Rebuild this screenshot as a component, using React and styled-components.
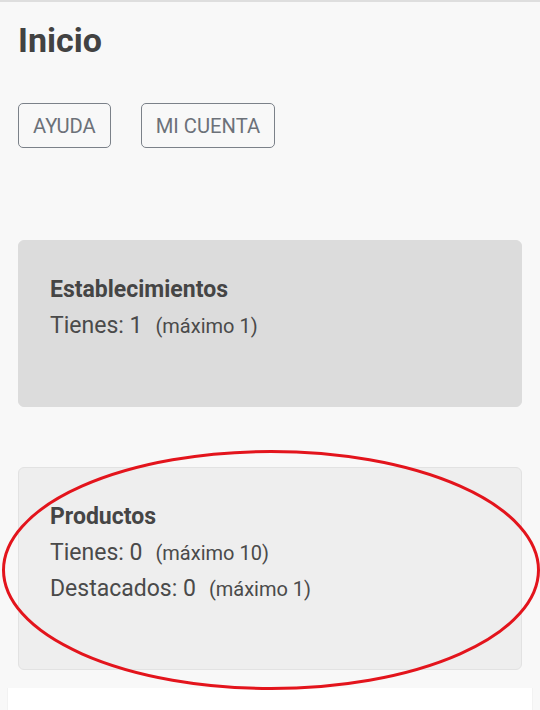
import React from "react";
import styled, { createGlobalStyle } from "styled-components";

const Global = createGlobalStyle`
  html, body { margin: 0; padding: 0; background: #f8f8f8; }
  body { font-family: Roboto, "Noto Sans", "Liberation Sans", sans-serif; }
  * { box-sizing: border-box; }
`;

const Page = styled.div`
  position: relative;
  width: 540px;
  height: 710px;
  overflow: hidden;
  background: #f8f8f8;
  border-top: 2px solid #dedede;
  padding: 18px 18px 0;
`;

const Title = styled.h1`
  margin: 0;
  font-size: 34px;
  line-height: 40px;
  font-weight: 700;
  color: #424242;
`;

const Actions = styled.div`
  display: flex;
  gap: 30px;
  margin-top: 43px;
`;

const OutlineButton = styled.button`
  height: 45px;
  display: flex;
  align-items: center;
  padding: 0 14px;
  background: transparent;
  border: 1px solid #7b8189;
  border-radius: 5px;
  font-family: Roboto, "Liberation Sans", sans-serif;
  font-size: 20.2px;
  color: #6c7179;
  letter-spacing: 0;
`;

const Card = styled.section`
  margin-top: ${(p) => p.$gap}px;
  background: ${(p) => (p.$muted ? "#eeeeee" : "#dcdcdc")};
  border: 1px solid ${(p) => (p.$muted ? "#e2e2e2" : "#dcdcdc")};
  border-radius: 6px;
  padding: 31px 31px 62px;
`;

const CardTitle = styled.div`
  font-size: 23px;
  line-height: 36px;
  font-weight: 700;
  color: #454545;
`;

const Line = styled.div`
  font-size: 23px;
  line-height: 36px;
  color: #4a4a4a;
`;

const Max = styled.span`
  font-size: 20px;
  margin-left: 13px;
`;

const Footer = styled.div`
  margin: 18px -11px 0;
  height: 40px;
  background: #ffffff;
  border-left: 1px solid #f2f2f2;
  border-right: 1px solid #f2f2f2;
`;

const Annotation = styled.svg`
  position: absolute;
  left: 0;
  top: 0;
  pointer-events: none;
`;

export default function App() {
  return (
    <>
      <Global />
      <Page>
        <Title>Inicio</Title>
        <Actions>
          <OutlineButton>AYUDA</OutlineButton>
          <OutlineButton>MI CUENTA</OutlineButton>
        </Actions>
        <Card $gap={92}>
          <CardTitle>Establecimientos</CardTitle>
          <Line>
            Tienes: 1<Max>(máximo 1)</Max>
          </Line>
        </Card>
        <Card $gap={60} $muted>
          <CardTitle>Productos</CardTitle>
          <Line>
            Tienes: 0<Max>(máximo 10)</Max>
          </Line>
          <Line>
            Destacados: 0<Max>(máximo 1)</Max>
          </Line>
        </Card>
        <Footer />
        <Annotation width="540" height="710" viewBox="0 0 540 710">
          <ellipse
            cx="271"
            cy="568"
            rx="267.5"
            ry="118.5"
            fill="none"
            stroke="#e3141c"
            strokeWidth="3"
          />
        </Annotation>
      </Page>
    </>
  );
}
